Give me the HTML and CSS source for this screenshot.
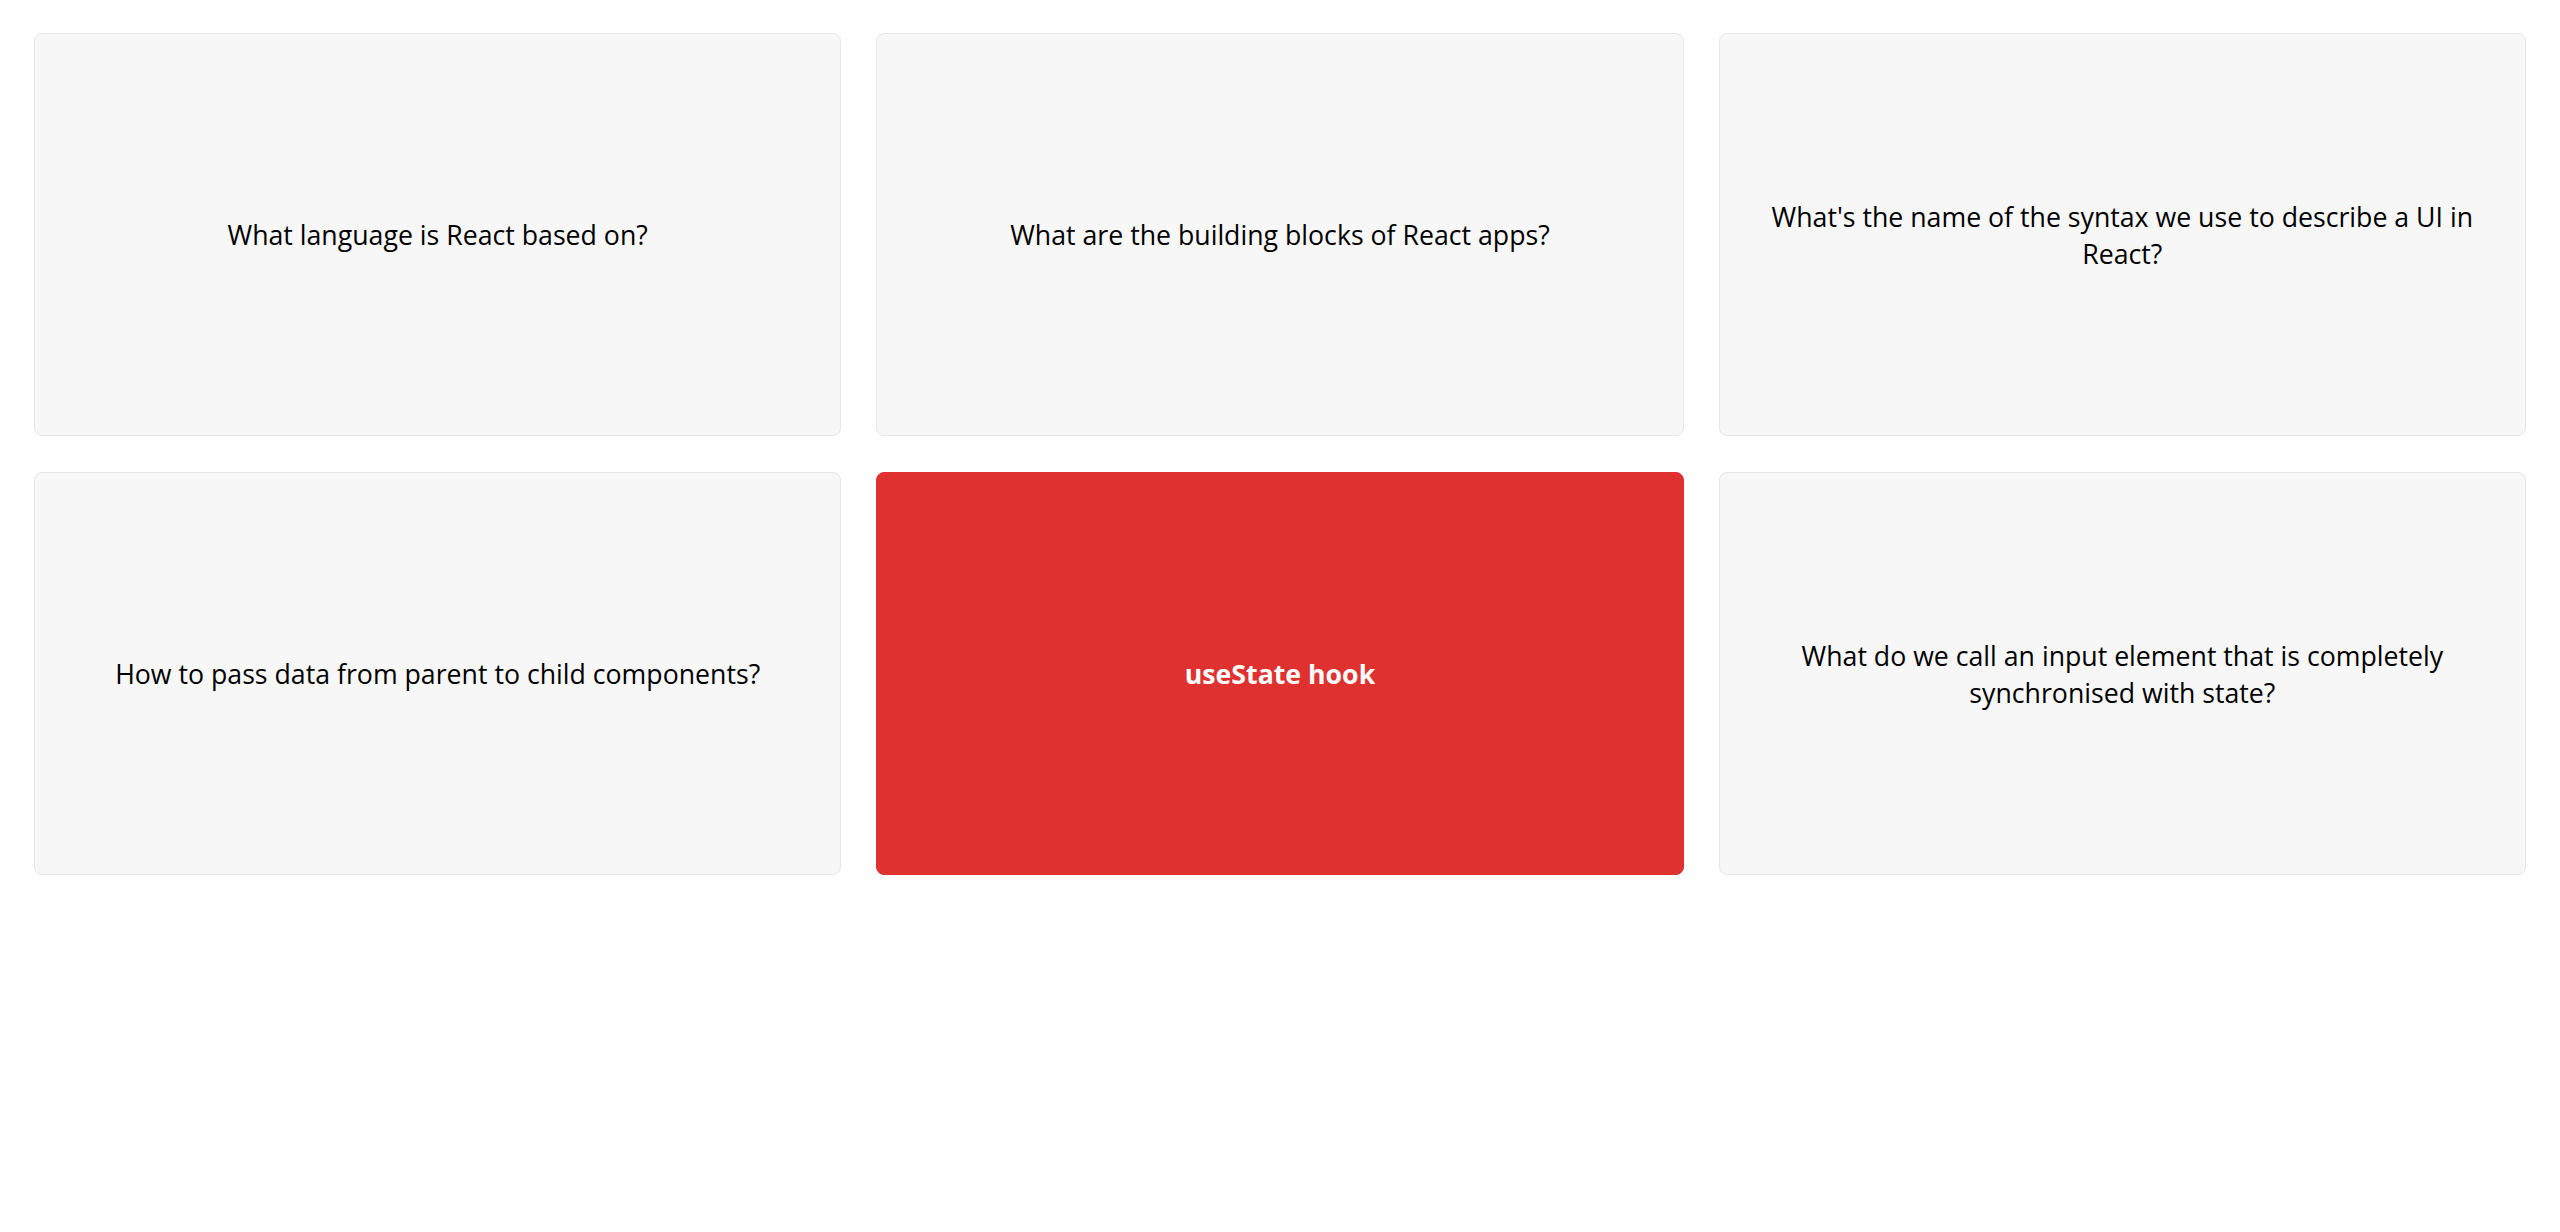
FILE: index.html
```html
<!DOCTYPE html>
<html lang="en">
<head>
<meta charset="utf-8">
<title>Flashcards</title>
<link rel="stylesheet" href="styles.css">
</head>
<body>
<div class="flashcards">
  <div class="card"><p>What language is React based on?</p></div>
  <div class="card"><p>What are the building blocks of React apps?</p></div>
  <div class="card"><p>What's the name of the syntax we use to describe a UI in React?</p></div>
  <div class="card"><p>How to pass data from parent to child components?</p></div>
  <div class="card selected"><p>useState hook</p></div>
  <div class="card"><p>What do we call an input element that is completely synchronised with state?</p></div>
</div>
</body>
</html>
```

FILE: styles.css
```css
* { box-sizing: border-box; margin: 0; padding: 0; }
html, body { background: #ffffff; }
body {
  font-family: "Open Sans", "Noto Sans", sans-serif;
  color: #000;
}
.flashcards {
  display: grid;
  grid-template-columns: repeat(3, 1fr);
  grid-auto-rows: 403px;
  column-gap: 35px;
  row-gap: 36px;
  padding: 33px 34px;
}
.card {
  display: flex;
  align-items: center;
  justify-content: center;
  text-align: center;
  padding: 0 34px;
  background: #f7f7f7;
  border: 1px solid #e6e6e6;
  border-radius: 8px;
  font-size: 26.7px;
  line-height: 37px;
}
.card.selected {
  background: #e03131;
  border-color: #e03131;
  color: #ffffff;
  font-weight: 700;
}
```
